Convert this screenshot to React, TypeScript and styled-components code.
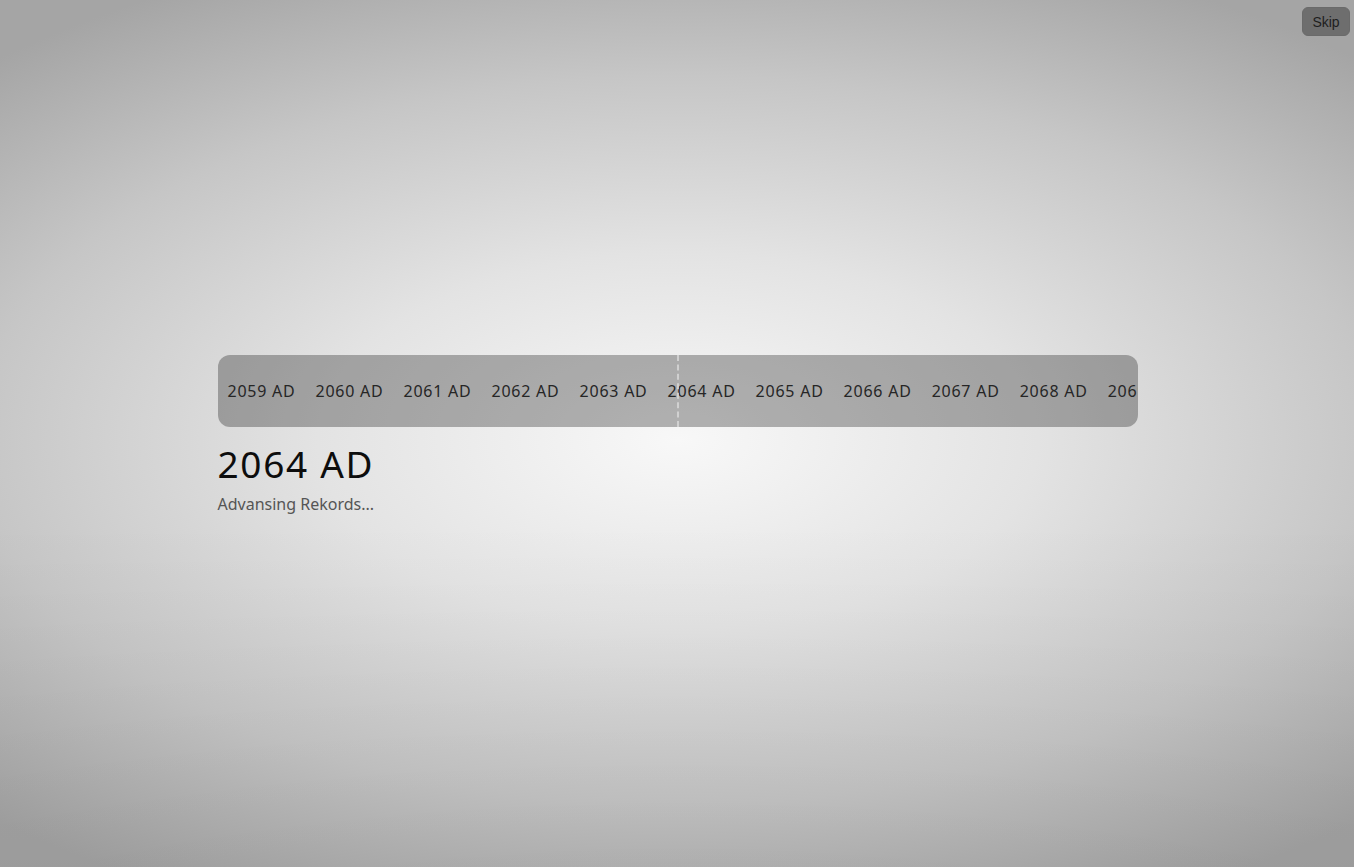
import React from "react";
import styled, { createGlobalStyle } from "styled-components";

const GlobalStyle = createGlobalStyle`
  html, body {
    margin: 0;
    padding: 0;
    height: 100%;
  }
  body {
    font-family: "Noto Sans", "Open Sans", sans-serif;
  }
  #root {
    height: 100%;
  }
`;

const Screen = styled.div`
  position: relative;
  width: 100vw;
  height: 100vh;
  overflow: hidden;
  background:
    linear-gradient(to bottom, rgba(0, 0, 0, 0) 60%, rgba(0, 0, 0, 0.06) 100%),
    radial-gradient(
      ellipse 1000px 520px at 678px 440px,
      #f8f8f8 0%,
      #e3e3e3 36%,
      #c6c6c6 70%,
      #a5a5a5 100%
    );
  display: flex;
  justify-content: center;
  align-items: flex-start;
  padding: 355px 0 0 1px;
  box-sizing: border-box;
`;

const SkipButton = styled.button`
  position: absolute;
  top: 7px;
  right: 4px;
  width: 48px;
  height: 29px;
  border-radius: 6px;
  border: 1px solid #6a6a6a;
  background: rgba(0, 0, 0, 0.33);
  color: #1e1e1e;
  font-family: "Liberation Sans", Arial, sans-serif;
  font-size: 14px;
  padding: 0;
  cursor: pointer;
`;

const Column = styled.div`
  width: 920px;
  display: flex;
  flex-direction: column;
`;

const Strip = styled.div`
  position: relative;
  height: 72px;
  border-radius: 12px;
  background: rgba(0, 0, 0, 0.285);
  overflow: hidden;
  display: flex;
  align-items: center;
`;

const Track = styled.div`
  display: flex;
  gap: 20px;
  padding-left: 10px;
  white-space: nowrap;
`;

const Year = styled.span`
  font-size: 16px;
  color: #262626;
  letter-spacing: 0.76px;
`;

const Marker = styled.div`
  position: absolute;
  top: 0;
  bottom: 0;
  left: 459px;
  width: 0;
  border-left: 2px dashed rgba(220, 220, 220, 0.75);
`;

const Title = styled.h1`
  margin: 15px 0 0;
  font-weight: 400;
  font-size: 37px;
  line-height: 44px;
  letter-spacing: 1.7px;
  color: #0d0d0d;
`;

const Caption = styled.p`
  margin: 7px 0 0;
  font-size: 16px;
  color: #555555;
`;

const years = Array.from({ length: 11 }, (_, i) => 2059 + i);

export default function App() {
  return (
    <>
      <GlobalStyle />
      <Screen>
        <SkipButton>Skip</SkipButton>
        <Column>
          <Strip>
            <Track>
              {years.map((y) => (
                <Year key={y}>{y} AD</Year>
              ))}
            </Track>
            <Marker />
          </Strip>
          <Title>2064 AD</Title>
          <Caption>Advansing Rekords...</Caption>
        </Column>
      </Screen>
    </>
  );
}
